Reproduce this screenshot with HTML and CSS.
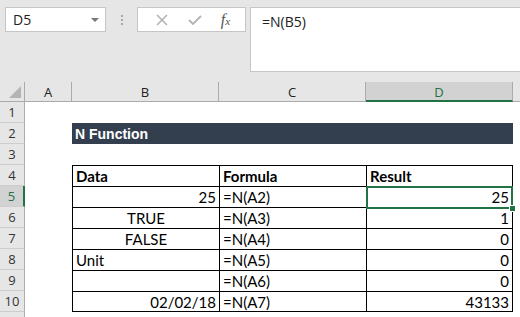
FILE: index.html
```html
<!DOCTYPE html>
<html lang="en">
<head>
    <meta charset="UTF-8">
    <title>N Function</title>
    <link rel="stylesheet" href="styles.css">
</head>
<body>

    <div class="toolbar">
        <div class="namebox">
            <span>D5</span>
            <span class="arrow"></span>
        </div>
        <div class="dots"><i></i><i></i><i></i></div>
        <div class="fxbox">
            <svg width="14" height="14" viewBox="0 0 14 14"><path d="M2 2 L12 12 M12 2 L2 12" stroke="#b3b3b3" stroke-width="1.6" fill="none"/></svg>
            <svg width="16" height="14" viewBox="0 0 16 14"><path d="M2 7 L6 11 L14 3" stroke="#b3b3b3" stroke-width="1.8" fill="none"/></svg>
            <span class="fx">f<small>x</small></span>
        </div>
        <div class="formula">=N(B5)</div>
    </div>

    <div class="sheet">
        <!-- column headers -->
        <div class="corner"><span></span></div>
        <div class="ch">A</div>
        <div class="ch">B</div>
        <div class="ch">C</div>
        <div class="ch active">D</div>
        <div class="ch last"></div>

        <!-- row 1 -->
        <div class="rh">1</div><div></div><div></div><div></div><div></div><div></div>
        <!-- row 2 -->
        <div class="rh">2</div><div></div>
        <div class="title">N Function</div>
        <div class="title"></div>
        <div class="title"></div>
        <div></div>
        <!-- row 3 -->
        <div class="rh">3</div><div></div><div></div><div></div><div></div><div></div>
        <!-- row 4 -->
        <div class="rh">4</div><div></div>
        <div class="tb b">Data</div>
        <div class="tb b">Formula</div>
        <div class="tb b end">Result</div>
        <div></div>
        <!-- row 5 -->
        <div class="rh active">5</div><div></div>
        <div class="tb r">25</div>
        <div class="tb">=N(A2)</div>
        <div class="tb r end sel">25</div>
        <div></div>
        <!-- row 6 -->
        <div class="rh">6</div><div></div>
        <div class="tb c">TRUE</div>
        <div class="tb">=N(A3)</div>
        <div class="tb r end">1</div>
        <div></div>
        <!-- row 7 -->
        <div class="rh">7</div><div></div>
        <div class="tb c">FALSE</div>
        <div class="tb">=N(A4)</div>
        <div class="tb r end">0</div>
        <div></div>
        <!-- row 8 -->
        <div class="rh">8</div><div></div>
        <div class="tb">Unit</div>
        <div class="tb">=N(A5)</div>
        <div class="tb r end">0</div>
        <div></div>
        <!-- row 9 -->
        <div class="rh">9</div><div></div>
        <div class="tb"></div>
        <div class="tb">=N(A6)</div>
        <div class="tb r end">0</div>
        <div></div>
        <!-- row 10 -->
        <div class="rh">10</div><div></div>
        <div class="tb bottom r">02/02/18</div>
        <div class="tb bottom">=N(A7)</div>
        <div class="tb bottom r end">43133</div>
        <div></div>
        <!-- row 11 -->
        <div class="rh"></div><div></div><div></div><div></div><div></div><div></div>
    </div>

</body>
</html>
```

FILE: styles.css
```css
body {
    margin: 0;
    width: 520px;
    height: 317px;
    overflow: hidden;
    background-color: #fff;
    font-family: Lato, "Liberation Sans", sans-serif;
}
.toolbar {
    height: 82px;
    background-color: #e6e6e6;
    display: flex;
    align-items: flex-start;
    padding-top: 7px;
    box-sizing: border-box;
    padding-left: 5px;
}
.namebox {
    width: 101px;
    height: 25px;
    box-sizing: border-box;
    background-color: #fff;
    border: 1px solid #c6c6c6;
    display: flex;
    align-items: center;
    justify-content: space-between;
    padding: 0 6px 0 7px;
    font-family: "Open Sans", sans-serif;
    font-size: 14px;
    color: #222;
}
.arrow {
    width: 0;
    height: 0;
    border-left: 4px solid transparent;
    border-right: 4px solid transparent;
    border-top: 4px solid #777;
}
.dots {
    width: 31px;
    height: 25px;
    display: flex;
    flex-direction: column;
    align-items: center;
    justify-content: center;
    gap: 2px;
}
.dots i {
    width: 2px;
    height: 2px;
    background-color: #a8a8a8;
}
.fxbox {
    width: 109px;
    height: 25px;
    box-sizing: border-box;
    background-color: #fff;
    border: 1px solid #c6c6c6;
    display: flex;
    align-items: center;
    justify-content: space-around;
    padding: 0 6px 0 8px;
}
.fx {
    font-family: "Liberation Serif", serif;
    font-style: italic;
    font-size: 16px;
    color: #555;
}
.fx small {
    font-size: 11px;
}
.formula {
    margin-left: 4px;
    flex: 1;
    height: 65px;
    box-sizing: border-box;
    background-color: #fff;
    border: 1px solid #c6c6c6;
    border-right: none;
    padding: 4px 0 0 11px;
    font-family: "Open Sans", sans-serif;
    font-size: 14px;
    color: #222;
}
.sheet {
    display: grid;
    grid-template-columns: 25px 47px 147px 147px 147px 1fr;
    grid-template-rows: 20px;
    grid-auto-rows: 21px;
    font-size: 15px;
    color: #000;
}
.sheet > div {
    box-sizing: border-box;
    line-height: 20px;
    padding: 0 3px;
    white-space: nowrap;
}
.corner {
    background-color: #e6e6e6;
    border-right: 1px solid #ababab;
    border-bottom: 1px solid #ababab;
    position: relative;
}
.corner span {
    position: absolute;
    right: 3px;
    bottom: 3px;
    width: 0;
    height: 0;
    border-left: 12px solid transparent;
    border-bottom: 12px solid #b4b4b4;
}
.ch {
    background-color: #e6e6e6;
    border-right: 1px solid #ababab;
    border-bottom: 1px solid #ababab;
    text-align: center;
    font-family: "Open Sans", sans-serif;
    font-size: 13px;
    color: #222;
}
.ch.last {
    border-right: none;
}
.ch.active {
    background-color: #d2d2d2;
    border-bottom: 2px solid #217346;
    color: #217346;
}
.rh {
    background-color: #e6e6e6;
    border-right: 1px solid #ababab;
    border-bottom: 1px solid #cdcdcd;
    text-align: center;
    font-family: "Open Sans", sans-serif;
    font-size: 13px;
    color: #333;
}
.rh.active {
    background-color: #d2d2d2;
    border-right: 2px solid #217346;
    color: #217346;
}
.title {
    background-color: #333f4f;
    color: #fff;
    font-family: "Liberation Sans", sans-serif;
    font-weight: bold;
    font-size: 14px;
    line-height: 22px !important;
}
.tb {
    border-left: 1px solid #000;
    border-top: 1px solid #000;
}
.tb.end {
    border-right: 1px solid #000;
}
.tb.bottom {
    border-bottom: 1px solid #000;
}
.b {
    font-weight: bold;
}
.r {
    text-align: right;
}
.c {
    text-align: center;
}
.sel {
    position: relative;
}
.sel::after {
    content: "";
    position: absolute;
    left: -1px;
    top: -1px;
    right: -1px;
    bottom: -2px;
    border: 2px solid #217346;
}
.sel::before {
    content: "";
    position: absolute;
    right: -4px;
    bottom: -5px;
    width: 5px;
    height: 5px;
    background-color: #217346;
    border: 1px solid #fff;
    z-index: 1;
}
```
